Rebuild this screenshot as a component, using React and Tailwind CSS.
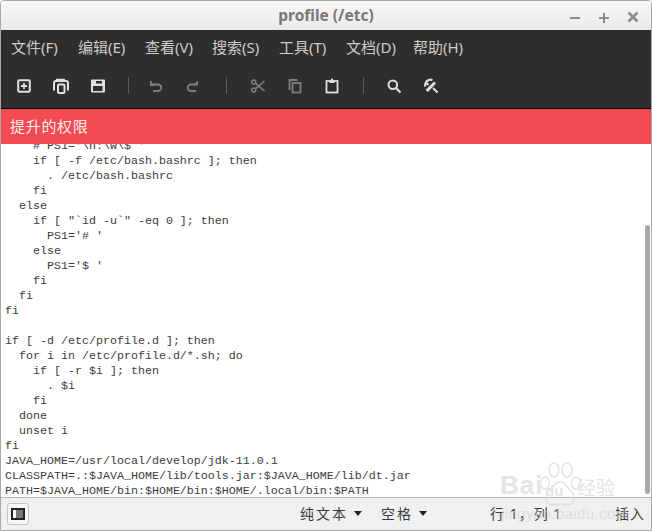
const MENUS = ['文件(F)', '编辑(E)', '查看(V)', '搜索(S)', '工具(T)', '文档(D)', '帮助(H)'];

const CODE = [
  "    # PS1='\\h:\\w\\$ '",
  '    if [ -f /etc/bash.bashrc ]; then',
  '      . /etc/bash.bashrc',
  '    fi',
  '  else',
  '    if [ "`id -u`" -eq 0 ]; then',
  "      PS1='# '",
  '    else',
  "      PS1='$ '",
  '    fi',
  '  fi',
  'fi',
  '',
  'if [ -d /etc/profile.d ]; then',
  '  for i in /etc/profile.d/*.sh; do',
  '    if [ -r $i ]; then',
  '      . $i',
  '    fi',
  '  done',
  '  unset i',
  'fi',
  'JAVA_HOME=/usr/local/develop/jdk-11.0.1',
  'CLASSPATH=.:$JAVA_HOME/lib/tools.jar:$JAVA_HOME/lib/dt.jar',
  'PATH=$JAVA_HOME/bin:$HOME/bin:$HOME/.local/bin:$PATH',
];

const Icon = ({ children, className = 'text-[#e2dede]' }) => (
  <svg width="16" height="16" viewBox="0 0 16 16" fill="none" className={className}>
    {children}
  </svg>
);

const ToolButton = ({ children, className = 'w-[37px]' }) => (
  <div className={`${className} flex justify-center items-center`}>{children}</div>
);

const Separator = () => <div className="w-px h-[17px] bg-[#5c5c5c] mx-[12px]" />;

const Toolbar = () => (
  <div className="h-[43px] flex items-center pl-[4px] pb-[2px]">
    <ToolButton>
      <Icon>
        <rect x="2.2" y="2.2" width="11.6" height="11.6" rx="1" stroke="currentColor" strokeWidth="2" />
        <path d="M8 5v6M5 8h6" stroke="currentColor" strokeWidth="1.8" />
      </Icon>
    </ToolButton>
    <ToolButton>
      <Icon>
        <path d="M3 1.5h9" stroke="currentColor" strokeWidth="1.5" />
        <path d="M1 12.5V5a2 2 0 0 1 2-2h10a2 2 0 0 1 2 2v7.5" stroke="currentColor" strokeWidth="2" />
        <rect x="5" y="6.5" width="6.5" height="8.5" rx="1" stroke="currentColor" strokeWidth="2" />
      </Icon>
    </ToolButton>
    <ToolButton>
      <Icon>
        <path
          fillRule="evenodd"
          d="M2 1.5h12a1 1 0 0 1 1 1v11a1 1 0 0 1-1 1H2a1 1 0 0 1-1-1v-11a1 1 0 0 1 1-1zM6 3v2.5h6V3zM3 8v5h9.5V8z"
          fill="currentColor"
        />
      </Icon>
    </ToolButton>
    <Separator />
    <ToolButton className="w-[30px]">
      <Icon className="text-[#7e7e7e]">
        <path d="M3 3v4h4" stroke="currentColor" strokeWidth="1.8" />
        <path d="M3.5 6.5H10a3.2 3.2 0 0 1 0 6.5H5" stroke="currentColor" strokeWidth="1.8" />
      </Icon>
    </ToolButton>
    <ToolButton className="w-[43px]">
      <Icon className="text-[#7e7e7e]">
        <path d="M13 2.5V7H8.5" fill="currentColor" />
        <path d="M12.5 6.5H6a3.2 3.2 0 0 0 0 6.5h5" stroke="currentColor" strokeWidth="1.8" />
      </Icon>
    </ToolButton>
    <Separator />
    <ToolButton className="w-[38px]">
      <Icon className="text-[#7e7e7e]">
        <circle cx="3.8" cy="12" r="2" stroke="currentColor" strokeWidth="1.6" />
        <circle cx="3.8" cy="4" r="2" stroke="currentColor" strokeWidth="1.6" />
        <path d="M5.3 5.2 14.5 13M5.3 10.8 14.5 3" stroke="currentColor" strokeWidth="1.6" />
      </Icon>
    </ToolButton>
    <ToolButton className="w-[36px]">
      <Icon className="text-[#7e7e7e]">
        <path d="M10.5 2H2.5v10" stroke="currentColor" strokeWidth="1.8" />
        <rect x="5.5" y="5" width="8" height="9.5" stroke="currentColor" strokeWidth="1.8" />
      </Icon>
    </ToolButton>
    <ToolButton className="w-[38px]">
      <Icon>
        <rect x="2.5" y="3" width="11" height="11.5" stroke="currentColor" strokeWidth="1.8" />
        <path d="M5.5 2.5h5V5h-5zM7 .8h2v2H7z" fill="currentColor" />
      </Icon>
    </ToolButton>
    <Separator />
    <ToolButton className="w-[36px]">
      <Icon>
        <circle cx="6.8" cy="6.8" r="4.3" stroke="currentColor" strokeWidth="2" />
        <path d="m10 10 4.5 4.5" stroke="currentColor" strokeWidth="2.2" />
      </Icon>
    </ToolButton>
    <ToolButton className="w-[38px]">
      <Icon>
        <path d="M2.3 8.5A5.5 5.5 0 0 1 9.5 2" stroke="currentColor" strokeWidth="2.2" />
        <path d="M2.5 12 11 3.5l2 2L5 14z" fill="currentColor" />
        <path d="m3.5 5 2 2M10 10l4.5 4.5" stroke="currentColor" strokeWidth="2" />
      </Icon>
    </ToolButton>
  </div>
);

const Watermark = () => (
  <div className="absolute left-[499px] top-[458px] w-[150px] h-[70px] pointer-events-none text-[#d4d4d4] opacity-60 font-['Liberation_Sans',sans-serif]">
    <svg width="46" height="54" viewBox="0 0 46 54" className="absolute left-[37px] top-[2px]" fill="none" stroke="currentColor" strokeWidth="1.5">
      <ellipse cx="8" cy="22" rx="4.5" ry="6" />
      <ellipse cx="17" cy="9" rx="5" ry="7" />
      <ellipse cx="30" cy="9" rx="5" ry="7" />
      <ellipse cx="39" cy="22" rx="4.5" ry="6" />
      <path d="M23 21c-6 0-7 6-11 9-5 4-4 13 3 14 3 0 5-1 8-1s5 1 8 1c7-1 8-10 3-14-4-3-5-9-11-9z" />
    </svg>
    <span className="absolute left-0 top-[13px] text-[26px] leading-none font-bold tracking-[1px]">Bai</span>
    <span className="absolute left-[45px] top-[24px] text-[15px] leading-none font-bold">du</span>
    <span className="absolute left-[77px] top-[18px] text-[19px] leading-none font-['Noto_Sans_CJK_SC',sans-serif]">经验</span>
    <span className="absolute left-[1px] top-[47px] text-[15px] leading-none tracking-[0.4px]">jingyan.baidu.com</span>
  </div>
);

const App = () => {
  return (
    <div className="relative w-[652px] h-[531px] overflow-hidden bg-white flex flex-col border border-[#a9a9a9] rounded-t-[4px] font-['Noto_Sans','Noto_Sans_CJK_SC',sans-serif]">
      <div className="h-[29px] shrink-0 relative flex items-center justify-center bg-gradient-to-b from-[#f7f7f7] to-[#eaeaea]">
        <span className="text-[15.5px] font-bold text-[#7b7773]">profile (/etc)</span>
        <div className="absolute right-[10px] top-[8px] flex items-center gap-[13px] text-[#8e8b88]">
          <svg width="16" height="16" viewBox="0 0 16 16"><path d="M3 9h10" stroke="currentColor" strokeWidth="2" /></svg>
          <svg width="16" height="16" viewBox="0 0 16 16"><path d="M3 9h10M8 4v10" stroke="currentColor" strokeWidth="2" /></svg>
          <svg width="16" height="16" viewBox="0 0 16 16"><path d="m3.5 3.5 9 9M12.5 3.5l-9 9" stroke="currentColor" strokeWidth="2.6" /></svg>
        </div>
      </div>

      <div className="shrink-0 bg-[#2e2e2e] border-b border-black">
        <div className="h-[35px] flex items-center pl-[10px] gap-[18px] text-[15px] text-[#cfcbc6]">
          {MENUS.map((item) => (
            <span key={item} className="w-[49px] whitespace-nowrap">{item}</span>
          ))}
        </div>
        <Toolbar />
      </div>

      <div className="h-[35px] shrink-0 flex items-center pl-[9px] bg-[#f34b53] text-[15px] text-[#fdeaea] tracking-[0.7px]">
        提升的权限
      </div>

      <div className="flex-1 min-h-0 overflow-hidden pl-[4px] font-['Liberation_Mono',monospace] text-[11.67px] leading-[15px] text-[#3c3c3c]">
        <div className="-mt-[5px]">
          {CODE.map((line, i) => (
            <div key={i} className="h-[15px] whitespace-pre">{line}</div>
          ))}
        </div>
      </div>

      <div className="h-[33px] shrink-0 flex items-center pb-[1px] bg-[#f0f0f0] border-t border-[#b5b5b5] text-[14px] text-[#3a3a3a]">
        <div className="ml-[6px] w-[22px] h-[22px] flex items-center justify-center rounded-[3px] border border-[#c4c4c4] bg-[#f6f6f6]">
          <div className="w-[14px] h-[12px] border-2 border-[#222] flex">
            <div className="w-[3px]" />
            <div className="flex-1 bg-[#777]" />
          </div>
        </div>
        <div className="ml-[271px] w-[81px] flex items-center gap-[6px] tracking-[2px]">
          <span>纯文本</span>
          <span className="w-0 h-0 border-x-[4px] border-x-transparent border-t-[5px] border-t-[#222]" />
        </div>
        <div className="w-[109px] flex items-center gap-[6px] tracking-[2px]">
          <span>空格</span>
          <span className="w-0 h-0 border-x-[4px] border-x-transparent border-t-[5px] border-t-[#222]" />
        </div>
        <span className="w-[125px] whitespace-nowrap tracking-[1px]">行 1，列 1</span>
        <span className="tracking-[1px]">插入</span>
      </div>

      <div className="absolute right-[1px] top-[224px] w-[5px] h-[269px] rounded-full bg-[#a8a8a8]" />
      <Watermark />
    </div>
  );
};

export default App;
